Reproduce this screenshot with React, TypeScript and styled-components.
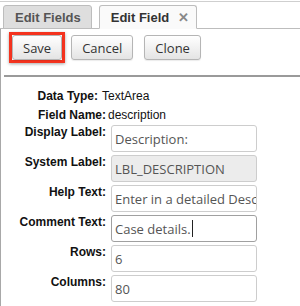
import React from 'react';
import styled, { createGlobalStyle } from 'styled-components';

const GlobalStyle = createGlobalStyle`
  body {
    margin: 0;
    background: #fff;
    font-family: 'Liberation Sans', Arial, sans-serif;
  }
`;

const Page = styled.div`
  width: 300px;
  height: 306px;
  overflow: hidden;
  margin-top: 1px;
  border-top: 1px solid #cfcfcf;
`;

const TabBar = styled.div`
  display: flex;
  align-items: flex-end;
  gap: 7px;
  padding: 3px 0 0 3px;
  border-bottom: 1px solid #bdbdbd;
`;

const Tab = styled.div<{ $active?: boolean }>`
  display: flex;
  align-items: center;
  gap: 9px;
  height: 22px;
  padding: 0 ${(p) => (p.$active ? '7px' : '10px')} 0 11px;
  margin-bottom: -1px;
  border: 1px solid #bdbdbd;
  border-bottom-color: ${(p) => (p.$active ? '#fafafa' : '#bdbdbd')};
  border-radius: 3px 3px 0 0;
  background: ${(p) => (p.$active ? '#fafafa' : '#dedede')};
  color: ${(p) => (p.$active ? '#333' : '#555')};
  font-size: 13px;
  font-weight: bold;
`;

const Close = styled.span`
  color: #888;
  font-size: 13px;
  font-weight: bold;
`;

const Panel = styled.div`
  border-left: 1px solid #a8a8a8;
  height: 100%;
`;

const Toolbar = styled.div`
  display: flex;
  align-items: center;
  gap: 6px;
  padding: 3px 0 12px 8px;
`;

const Highlight = styled.div`
  display: flex;
  border: 3px solid #f4331f;
  box-shadow: 0 1px 3px rgba(0, 0, 0, 0.35);
`;

const Button = styled.button<{ $spaced?: boolean }>`
  height: 25px;
  padding: 0 10px;
  margin-left: ${(p) => (p.$spaced ? '5px' : '0')};
  border: 1px solid #b5b5b5;
  border-radius: 3px;
  background: linear-gradient(#ffffff, #e4e4e4);
  color: #333;
  font-family: 'Open Sans', sans-serif;
  font-size: 13px;
  box-shadow: 0 1px 1px rgba(0, 0, 0, 0.08);
`;

const Divider = styled.div`
  margin-left: 3px;
  border-top: 2px solid #9a9a9a;
`;

const Form = styled.div`
  display: flex;
  flex-direction: column;
  gap: 3px;
  padding-top: 10px;
`;

const Row = styled.div<{ $text?: boolean }>`
  display: grid;
  grid-template-columns: 105px 146px;
  column-gap: ${(p) => (p.$text ? '2px' : '5px')};
  align-items: start;
  margin-bottom: ${(p) => (p.$text ? '-3px' : '0')};
`;

const Label = styled.div<{ $text?: boolean; $inset?: number }>`
  text-align: right;
  font-size: 12px;
  font-weight: bold;
  color: #111;
  line-height: ${(p) => (p.$text ? '19px' : '14px')};
  padding-right: ${(p) => p.$inset ?? 0}px;
`;

const Value = styled.div<{ $shift?: number }>`
  font-size: 12px;
  line-height: 19px;
  color: #111;
  margin-left: ${(p) => p.$shift ?? 0}px;
`;

const Field = styled.div<{ $disabled?: boolean; $focused?: boolean }>`
  height: 25px;
  padding: 0 1px 0 3px;
  display: flex;
  align-items: center;
  border: 1px solid ${(p) => (p.$focused ? '#a0a0a0' : '#cdcdcd')};
  border-radius: 3px;
  background: ${(p) => (p.$disabled ? '#ececec' : '#fff')};
  color: #555;
  font-family: 'Open Sans', sans-serif;
  font-size: 13px;
  white-space: nowrap;
  overflow: hidden;
`;

const Caret = styled.span`
  display: inline-block;
  width: 1px;
  height: 17px;
  margin-left: 1px;
  background: #222;
`;

type InfoRow = { label: string; value: string; inset?: number; shift?: number };
type InputRow = { label: string; value: string; disabled?: boolean; focused?: boolean };

const info: InfoRow[] = [
  { label: 'Data Type:', value: 'TextArea', inset: 8, shift: -6 },
  { label: 'Field Name:', value: 'description' },
];

const inputs: InputRow[] = [
  { label: 'Display Label:', value: 'Description:' },
  { label: 'System Label:', value: 'LBL_DESCRIPTION', disabled: true },
  { label: 'Help Text:', value: 'Enter in a detailed Description' },
  { label: 'Comment Text:', value: 'Case details.', focused: true },
  { label: 'Rows:', value: '6' },
  { label: 'Columns:', value: '80' },
];

const App = () => (
  <>
    <GlobalStyle />
    <Page>
      <TabBar>
        <Tab>Edit Fields</Tab>
        <Tab $active>
          Edit Field <Close>✕</Close>
        </Tab>
      </TabBar>
      <Panel>
        <Toolbar>
          <Highlight>
            <Button>Save</Button>
          </Highlight>
          <Button>Cancel</Button>
          <Button $spaced>Clone</Button>
        </Toolbar>
        <Divider />
        <Form>
          {info.map((row) => (
            <Row $text key={row.label}>
              <Label $text $inset={row.inset}>
                {row.label}
              </Label>
              <Value $shift={row.shift}>{row.value}</Value>
            </Row>
          ))}
          {inputs.map((row) => (
            <Row key={row.label}>
              <Label>{row.label}</Label>
              <Field $disabled={row.disabled} $focused={row.focused}>
                {row.value}
                {row.focused && <Caret />}
              </Field>
            </Row>
          ))}
        </Form>
      </Panel>
    </Page>
  </>
);

export default App;
